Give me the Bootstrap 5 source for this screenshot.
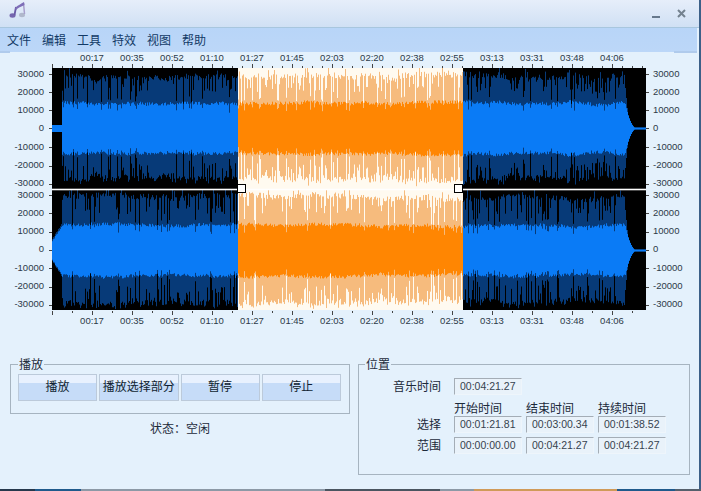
<!DOCTYPE html>
<html lang="zh-CN">
<head>
    <meta charset="UTF-8">
    <title>音频编辑器</title>
    <link href="https://cdn.jsdelivr.net/npm/bootstrap@5.3.0/dist/css/bootstrap.min.css" rel="stylesheet">
    <style>
        html, body {
            width: 701px;
            height: 491px;
            overflow: hidden;
            background-color: #e4f1fc;
        }

        body {
            font-family: "Liberation Sans", "Noto Sans CJK SC", sans-serif;
            font-size: 12px;
            color: #1c2a3a;
        }

        .app-window {
            width: 701px;
            height: 491px;
            border-right: 2px solid #3c6088;
            background-color: #e4f1fc;
        }

        .title-strip {
            height: 28px;
            padding: 1px 13px 0 9px;
            background: linear-gradient(#e6eefa, #dbe7f7 50%, #d0e0f4);
            border-bottom: 1px solid #a8c6de;
        }

        .min-mark {
            width: 8px;
            height: 2px;
            margin: 15px 17px 0 0;
            background-color: #66788c;
        }

        .close-mark {
            margin-top: 8px;
        }

        .menu-strip {
            height: 24px;
            margin-right: 2px;
            padding-left: 7px;
            gap: 11px;
            background: linear-gradient(#b8d5f8, #bcd7f8);
            color: #123a66;
            font-family: "Noto Sans CJK SC", sans-serif;
            line-height: 24px;
        }

        .menu-strip::before,
        .menu-strip::after {
            content: "";
            position: absolute;
            bottom: -1px;
            height: 2px;
            background-color: #b0cbec;
        }

        .menu-strip::before {
            left: 0;
            width: 10px;
        }

        .menu-strip::after {
            right: 0;
            width: 23px;
        }

        .time-ruler {
            height: 11px;
            padding-left: 72px;
            font-size: 9.5px;
            line-height: 11px;
            color: #2c3a48;
        }

        .time-ruler span {
            width: 40px;
            text-align: center;
        }

        .wave-area {
            height: 252px;
        }

        .amp-col {
            width: 46px;
            padding: 5px 2px 5px 0;
            font-size: 9.5px;
            line-height: 11px;
            text-align: right;
            color: #2c3a48;
        }

        .amp-col.amp-right {
            width: 47px;
            padding: 5px 0 5px 1px;
            text-align: left;
        }

        .amp-col > div {
            height: 121px;
            padding-bottom: 1px;
        }

        .wave-box {
            width: 606px;
            height: 252px;
        }

        .wave-box canvas {
            display: block;
        }

        .sel-handle {
            position: absolute;
            top: 121px;
            width: 9px;
            height: 9px;
            background-color: #fff;
            border: 1px solid #000;
        }

        .panels {
            padding: 32px 9px 0 10px;
            gap: 8px;
        }

        .play-col {
            width: 340px;
        }

        .group-frame {
            border: 1px solid #a6b4c0;
            margin: 0;
        }

        .group-frame legend {
            margin: 0 0 0 6px;
            padding: 0 1px;
            font-family: "Noto Sans CJK SC", sans-serif;
            font-size: 12px;
            line-height: 12px;
        }

        .play-frame {
            height: 56px;
            padding: 4px 8px 0 7px;
        }

        .play-frame legend {
            margin-left: 0;
        }

        .play-row {
            gap: 2px;
        }

        .play-btn {
            flex: 1 1 0;
            height: 27px;
            padding: 0 0 3px 0;
            border: 1px solid #bccada;
            border-radius: 0;
            background: linear-gradient(#e8f1fe 0, #e8f1fe 33%, #c6dcf8 34%, #c6dcf8 100%);
            font-family: "Noto Sans CJK SC", sans-serif;
            font-size: 12px;
            color: #0f1e30;
            white-space: nowrap;
        }

        .status-line {
            margin-top: 5px;
            font-family: "Noto Sans CJK SC", sans-serif;
            text-align: center;
        }

        .pos-frame {
            width: 332px;
            height: 117px;
            padding: 8px 0 0 0;
        }

        .pos-grid {
            display: grid;
            grid-template-columns: 91px 68px 68px 68px;
            column-gap: 4px;
            font-family: "Noto Sans CJK SC", sans-serif;
        }

        .pos-label {
            padding-right: 9px;
            text-align: right;
            line-height: 16px;
        }

        .pos-head {
            padding-top: 1px;
            line-height: 16px;
        }

        .time-box {
            height: 17px;
            margin-bottom: 4px;
            padding-left: 5px;
            border: 1px solid;
            border-color: #a4adb6 #eef5fb #eef5fb #a4adb6;
            background-color: #e9f2fa;
            font-family: "Liberation Sans", sans-serif;
            font-size: 10.5px;
            line-height: 15px;
            color: #36424e;
        }

        .taskbar-edge {
            position: absolute;
            left: 0;
            top: 489px;
            width: 701px;
            height: 2px;
            background: linear-gradient(90deg, #26384c 0 35px, #1f5a8c 35px 81px, #8c99a6 81px 325px, #4a5560 325px 440px, #8c99a6 440px 474px, #d09a58 474px 617px, #1f5a8c 617px 675px, #55606c 675px 701px);
        }
    </style>
</head>
<body class="position-relative">

<div class="app-window d-flex flex-column">
    <div class="title-strip d-flex align-items-start">
        <svg width="20" height="18" viewBox="0 0 20 18" class="flex-shrink-0">
            <ellipse cx="13" cy="14" rx="3" ry="2.2" fill="#b0b8cc"/>
            <path d="M14.5 2 L15.5 13" stroke="#a8a0cc" stroke-width="1.5"/>
            <ellipse cx="3.5" cy="14.5" rx="3" ry="2.2" fill="#7566ae"/>
            <path d="M5.5 14 L7 6" stroke="#6a5aa6" stroke-width="1.8"/>
            <path d="M6 7 C9 4 12 3 15 1 L15.5 4 C12 5.5 9 7 7 9Z" fill="#7e6eb8"/>
        </svg>
        <div class="flex-grow-1"></div>
        <div class="min-mark"></div>
        <svg class="close-mark" width="9" height="9" viewBox="0 0 9 9">
            <path d="M1 1 L8 8 M8 1 L1 8" stroke="#74828f" stroke-width="2"/>
        </svg>
    </div>

    <div class="menu-strip d-flex position-relative">
        <span>文件</span><span>编辑</span><span>工具</span><span>特效</span><span>视图</span><span>帮助</span>
    </div>

    <div class="time-ruler d-flex">
        <span>00:17</span><span>00:35</span><span>00:52</span><span>01:10</span><span>01:27</span><span>01:45</span><span>02:03</span>
        <span>02:20</span><span>02:38</span><span>02:55</span><span>03:13</span><span>03:31</span><span>03:48</span><span>04:06</span>
    </div>

    <div class="wave-area d-flex">
        <div class="amp-col" id="ampLeft"></div>
        <div class="wave-box position-relative">
            <canvas id="wave" width="606" height="252"></canvas>
            <div class="sel-handle" style="left: 191px"></div>
            <div class="sel-handle" style="left: 408px"></div>
        </div>
        <div class="amp-col amp-right" id="ampRight"></div>
    </div>

    <div class="time-ruler d-flex">
        <span>00:17</span><span>00:35</span><span>00:52</span><span>01:10</span><span>01:27</span><span>01:45</span><span>02:03</span>
        <span>02:20</span><span>02:38</span><span>02:55</span><span>03:13</span><span>03:31</span><span>03:48</span><span>04:06</span>
    </div>

    <div class="panels d-flex align-items-start">
        <div class="play-col">
            <fieldset class="group-frame play-frame">
                <legend class="float-none w-auto">播放</legend>
                <div class="d-flex play-row">
                    <button class="btn play-btn">播放</button>
                    <button class="btn play-btn">播放选择部分</button>
                    <button class="btn play-btn">暂停</button>
                    <button class="btn play-btn">停止</button>
                </div>
            </fieldset>
            <div class="status-line">状态：空闲</div>
        </div>

        <fieldset class="group-frame pos-frame">
            <legend class="float-none w-auto">位置</legend>
            <div class="pos-grid">
                <div class="pos-label">音乐时间</div>
                <div class="time-box">00:04:21.27</div>
                <div></div><div></div>

                <div></div>
                <div class="pos-head">开始时间</div>
                <div class="pos-head">结束时间</div>
                <div class="pos-head">持续时间</div>

                <div class="pos-label">选择</div>
                <div class="time-box">00:01:21.81</div>
                <div class="time-box">00:03:00.34</div>
                <div class="time-box">00:01:38.52</div>

                <div class="pos-label">范围</div>
                <div class="time-box">00:00:00.00</div>
                <div class="time-box">00:04:21.27</div>
                <div class="time-box">00:04:21.27</div>
            </div>
        </fieldset>
    </div>
</div>

<div class="taskbar-edge"></div>

<script>
    const ampLabels = ["30000", "20000", "10000", "0", "-10000", "-20000", "-30000"];

    function fillAmp(id) {
        const col = document.getElementById(id);
        for (let c = 0; c < 2; c++) {
            const group = document.createElement("div");
            group.className = "d-flex flex-column justify-content-between";
            ampLabels.forEach(text => {
                const item = document.createElement("span");
                item.textContent = text;
                group.appendChild(item);
            });
            col.appendChild(group);
        }
    }
    fillAmp("ampLeft");
    fillAmp("ampRight");

    // small seeded generator so every render gives the same waveform
    let seed = 20417;
    function rnd() {
        seed = (seed * 1664525 + 1013904223) % 4294967296;
        return seed / 4294967296;
    }

    const canvas = document.getElementById("wave");
    const ctx = canvas.getContext("2d");
    const ox = 46, oy = 63;   // canvas origin in page coordinates
    const selA = 238, selB = 463;

    function vline(x, y1, y2, color) {
        ctx.fillStyle = color;
        ctx.fillRect(x - ox, y1 - oy, 1, y2 - y1);
    }

    // returns [upper outer, lower outer, upper inner, lower inner] half heights in pixels
    function envelope(x, channel, walk) {
        if (x >= 625) {
            const t = Math.max(0, (636 - x) / 11);
            const o = x < 629 ? 40 * (629 - x) / 4 : 0;
            const i = Math.max(0.6, 24 * t * t);
            return [o, o, i, i];
        }
        if (x < 62) {
            if (channel === 0) return [0, 0, 3, 3];
            const t = (x - 52) / 10;
            const j = rnd() * 2;
            return [10 + 16 * t + j, 10 + 16 * t + j, 8 + 15 * t + j, 8 + 15 * t + j];
        }
        let fade = 1;
        if (channel === 0 && x > 590 && x < 612) fade = 0.94;
        let outer = (channel === 0 ? 48 : 50) + walk * 3 + rnd() * 6;
        const r = rnd();
        let spike = 0;
        if (r < 0.1) outer = 24 + rnd() * 8;
        else if (r < 0.3) outer = 36 + rnd() * 9;
        else if (r > 0.95) spike = 5 + rnd() * 4;
        const lowOuter = outer * (0.94 + rnd() * 0.1);
        let inner = 23 + walk * 1.5 + rnd() * 3.5;
        if (r < 0.1) inner -= 3 + rnd() * 5;
        const lowInner = 23 + walk * 1.5 + rnd() * 3.5 - (r < 0.1 ? 4 : 0);
        return [(outer + spike) * fade, lowOuter * fade, inner * fade, lowInner * fade];
    }

    function drawChannel(top, bottom, center, channel) {
        let walk = 0;
        for (let x = 52; x < 646; x++) {
            walk += (rnd() - 0.5) * 0.5;
            walk *= 0.96;
            const sel = x >= selA && x < selB;
            const [up, low, iu, il] = envelope(x, channel, walk);
            vline(x, top, bottom, sel ? "#fffaf0" : "#000");
            if (up > 0) {
                vline(x, Math.max(top, center - up), Math.min(bottom, center + low), sel ? "#f6bb7d" : "#073a78");
            }
            vline(x, center - iu, center + il + 1, sel ? "#ff8602" : "#0a7bf6");
        }
    }

    drawChannel(68, 189, 128, 0);
    drawChannel(190, 310, 250, 1);

    // soften the columns a little, the reference is a compressed screenshot
    ctx.save();
    ctx.beginPath();
    ctx.rect(52 - ox, 68 - oy, 594, 242);
    ctx.clip();
    ctx.filter = "blur(0.5px)";
    ctx.drawImage(canvas, 0, 0);
    ctx.restore();

    // cursor line between the two channels
    ctx.fillStyle = "#fff";
    ctx.fillRect(52 - ox, 188.7 - oy, 594, 1.6);

    // rulers
    ctx.fillStyle = "#444";
    for (let x = 52, i = 0; x < 648; x += 10, i++) {
        const major = i % 4 === 0;
        if (i % 2 === 0) {
            ctx.fillRect(x - ox, 311 - oy, 1, major ? 4 : 2);
        }
        ctx.fillRect(x - ox, (major ? 64 : 66) - oy, 1, major ? 4 : 2);
    }
    [74, 92, 110, 128, 147, 166, 184, 195, 213, 232, 250, 268, 287, 305].forEach(y => {
        ctx.fillRect(49 - ox, y - oy, 3, 1);
        ctx.fillRect(646 - ox, y - oy, 3, 1);
    });
</script>
<script src="https://cdn.jsdelivr.net/npm/bootstrap@5.3.0/dist/js/bootstrap.bundle.min.js"></script>
</body>
</html>
